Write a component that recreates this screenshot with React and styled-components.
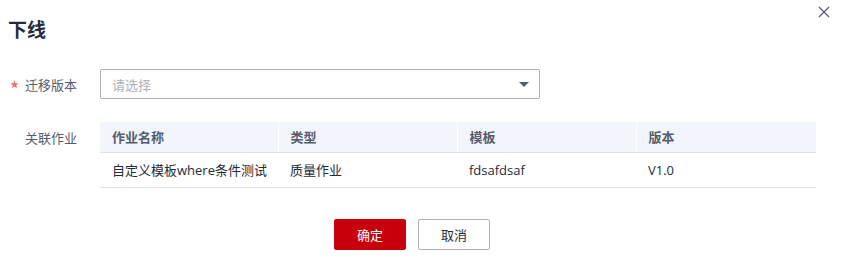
import React from "react";
import styled, { createGlobalStyle } from "styled-components";

const GlobalStyle = createGlobalStyle`
  body {
    margin: 0;
    background: #ffffff;
    font-family: "Open Sans", "Noto Sans CJK SC", sans-serif;
  }
  * { box-sizing: border-box; }
`;

// --- Styled Components ---

const Dialog = styled.div`
  position: relative;
  width: 842px;
  height: 268px;
  background: #fff;
  padding: 14px 0 0 0;
`;

const Title = styled.h2`
  margin: 0 0 0 8px;
  font-size: 19px;
  font-weight: 700;
  line-height: 32px;
  color: #252b3a;
`;

const CloseButton = styled.button`
  position: absolute;
  top: 4px;
  right: 10px;
  width: 16px;
  height: 16px;
  padding: 0;
  border: none;
  background: transparent;
  display: flex;
  align-items: center;
  justify-content: center;
`;

const Form = styled.div`
  margin-top: 23px;
  display: flex;
  flex-direction: column;
  gap: 23px;
`;

const Row = styled.div`
  display: flex;
  align-items: ${(p) => (p.top ? "flex-start" : "center")};
`;

const Label = styled.label`
  width: 100px;
  padding-left: 10px;
  display: flex;
  align-items: center;
  height: 30px;
  font-size: 13px;
  color: #575d6c;
`;

const Star = styled.span`
  width: 15px;
  height: 30px;
  display: flex;
  align-items: center;
  color: #f66f6a;
`;

const Select = styled.div`
  width: 440px;
  height: 30px;
  border: 1px solid #adb0b8;
  border-radius: 2px;
  display: flex;
  align-items: center;
  justify-content: space-between;
  padding: 0 10px 0 11px;
  font-size: 13px;
  color: #adb0b8;
`;

const Caret = styled.span`
  width: 0;
  height: 0;
  border-left: 5px solid transparent;
  border-right: 5px solid transparent;
  border-top: 5px solid #575d6c;
`;

const Table = styled.table`
  width: 716px;
  border-collapse: collapse;
  table-layout: fixed;
  font-size: 13px;
`;

const Th = styled.th`
  height: 30px;
  background: #f2f5fc;
  color: #575d6c;
  font-weight: 600;
  text-align: left;
  padding: 0 12px;
  border-bottom: 1px solid #dfe1e6;
  border-left: 1px solid #ffffff;
  &:first-child { border-left: none; }
`;

const Td = styled.td`
  height: 35px;
  color: #252b3a;
  padding: 0 12px;
  border-bottom: 1px solid #dfe1e6;
  white-space: nowrap;
`;

const Footer = styled.div`
  margin-top: 31px;
  display: flex;
  justify-content: center;
  gap: 12px;
  padding-right: 18px;
`;

const Button = styled.button`
  width: 72px;
  height: 31px;
  border-radius: 2px;
  font-family: inherit;
  font-size: 13px;
  border: 1px solid ${(p) => (p.$primary ? "#c7000b" : "#adb0b8")};
  background: ${(p) => (p.$primary ? "#c7000b" : "#ffffff")};
  color: ${(p) => (p.$primary ? "#ffffff" : "#252b3a")};
`;

const columns = [
  { title: "作业名称", width: 178 },
  { title: "类型", width: 179 },
  { title: "模板", width: 179 },
  { title: "版本", width: 180 },
];

const rows = [["自定义模板where条件测试", "质量作业", "fdsafdsaf", "V1.0"]];

export default function App() {
  return (
    <>
      <GlobalStyle />
      <Dialog>
        <Title>下线</Title>
        <CloseButton aria-label="close">
          <svg width="12" height="12" viewBox="0 0 12 12">
            <path d="M1 1 L11 11 M11 1 L1 11" stroke="#575d6c" strokeWidth="1.3" />
          </svg>
        </CloseButton>

        <Form>
          <Row>
            <Label>
              <Star>
                <svg width="9" height="9" viewBox="0 0 10 10">
                  <path
                    d="M5 0.3 L6.1 3.6 L9.6 3.6 L6.8 5.7 L7.9 9.2 L5 7.1 L2.1 9.2 L3.2 5.7 L0.4 3.6 L3.9 3.6 Z"
                    fill="#f66f6a"
                  />
                </svg>
              </Star>
              迁移版本
            </Label>
            <Select>
              <span>请选择</span>
              <Caret />
            </Select>
          </Row>

          <Row top>
            <Label>
              <Star />关联作业
            </Label>
            <Table>
              <colgroup>
                {columns.map((c) => (
                  <col key={c.title} style={{ width: c.width }} />
                ))}
              </colgroup>
              <thead>
                <tr>
                  {columns.map((c) => (
                    <Th key={c.title}>{c.title}</Th>
                  ))}
                </tr>
              </thead>
              <tbody>
                {rows.map((r, i) => (
                  <tr key={i}>
                    {r.map((cell, j) => (
                      <Td key={j}>{cell}</Td>
                    ))}
                  </tr>
                ))}
              </tbody>
            </Table>
          </Row>
        </Form>

        <Footer>
          <Button $primary>确定</Button>
          <Button>取消</Button>
        </Footer>
      </Dialog>
    </>
  );
}
